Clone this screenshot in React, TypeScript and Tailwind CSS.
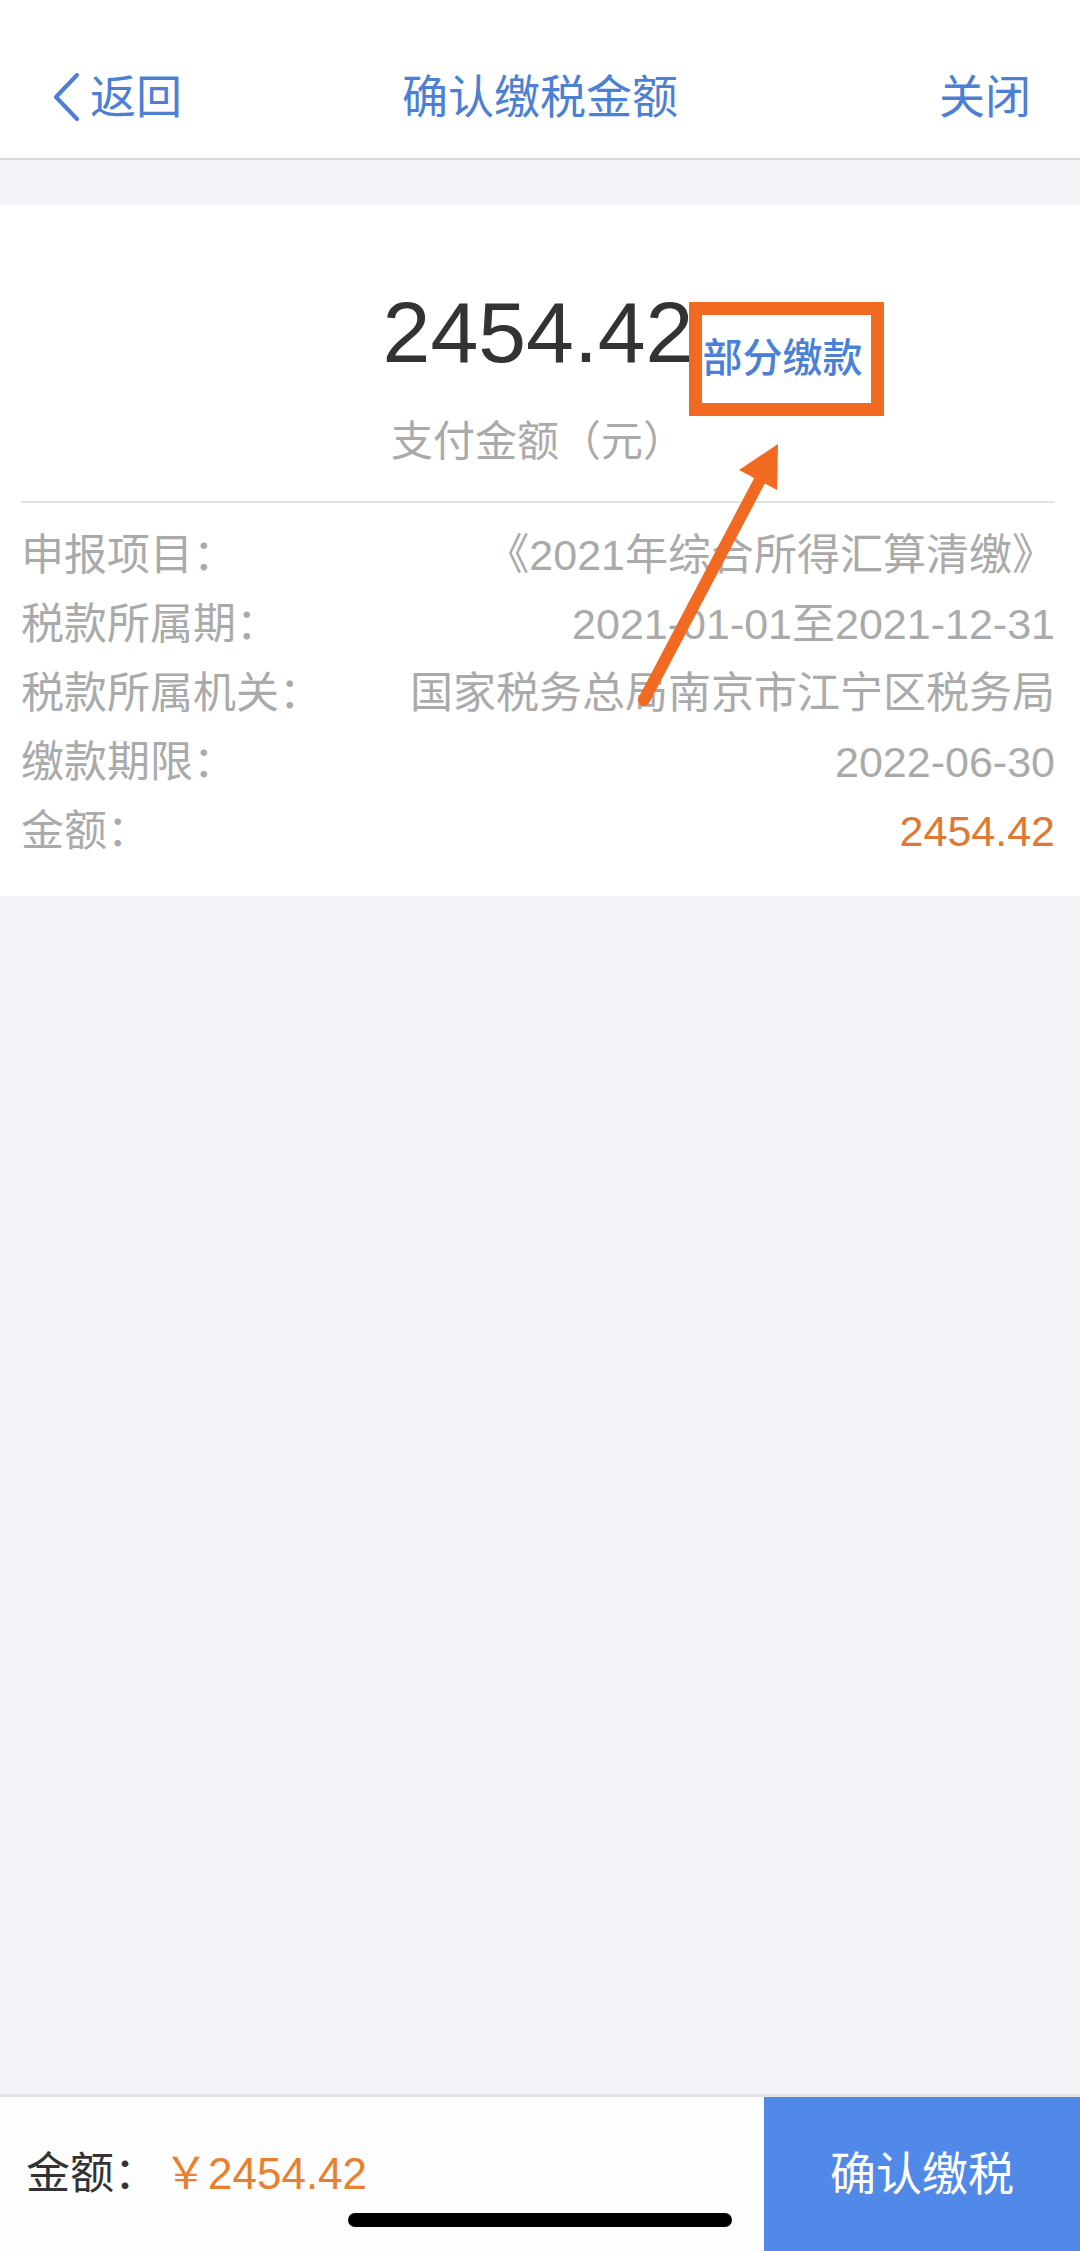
const font = "font-['Liberation_Sans','Noto_Sans_CJK_SC',sans-serif]";

const rows = [
  { label: "申报项目：", value: "《2021年综合所得汇算清缴》" },
  { label: "税款所属期：", value: "2021-01-01至2021-12-31" },
  { label: "税款所属机关：", value: "国家税务总局南京市江宁区税务局" },
  { label: "缴款期限：", value: "2022-06-30" },
  { label: "金额：", value: "2454.42", highlight: true },
];

function Header() {
  return (
    <header className="relative flex h-[160px] shrink-0 items-center justify-between border-b-2 border-[#d9d9dc] bg-white pl-[52px] pr-[49px] pt-[36px] text-[46px] text-[#4d7fd4]">
      <button type="button" className="flex items-center gap-[10px]">
        <svg width="28" height="48" viewBox="0 0 28 48" fill="none">
          <path d="M25 2 L4 24 L25 46" stroke="currentColor" strokeWidth="4" strokeLinecap="round" strokeLinejoin="round" />
        </svg>
        <span>返回</span>
      </button>
      <h1 className="pointer-events-none absolute inset-x-0 bottom-0 top-[36px] flex items-center justify-center text-[46px] font-normal">
        确认缴税金额
      </h1>
      <button type="button">关闭</button>
    </header>
  );
}

function Arrow() {
  return (
    <svg className="pointer-events-none absolute left-0 top-0" width="1080" height="900" viewBox="0 0 1080 900">
      <line x1="644" y1="700" x2="762" y2="476" stroke="#f26a22" strokeWidth="12" strokeLinecap="round" />
      <polygon points="778,444 739,470 777,490" fill="#f26a22" />
    </svg>
  );
}

export default function App() {
  return (
    <div className={`${font} relative flex h-[2251px] w-[1080px] flex-col overflow-hidden bg-[#f3f4f8]`}>
      <Header />

      <section className="mt-[45px] bg-white pb-[30px] pl-[21px] pr-[25px]">
        <div className="flex justify-center pt-[83px]">
          <div className="relative">
            <span className="block text-[86px] leading-[88px] text-[#333333]">2454.42</span>
            <div className="absolute bottom-[-40px] left-full -ml-[4px] h-[114px] w-[195px] border-[13px] border-[#f26a22]">
              <span className="absolute left-0 top-[23px] whitespace-nowrap text-[40px] font-medium leading-[40px] text-[#4a80d8]">部分缴款</span>
            </div>
          </div>
        </div>
        <p className="mt-[38px] text-center text-[42px] leading-[56px] text-[#aaaaaa]">支付金额（元）</p>
        <div className="mt-[31px] border-t-2 border-[#e3e3e3] pt-[18px]">
          {rows.map((row) => (
            <div key={row.label} className="flex h-[69px] items-center justify-between text-[43px]">
              <span className="text-[#aaaaaa]">{row.label}</span>
              <span className={row.highlight ? "text-[#e07834]" : "text-[#aaaaaa]"}>{row.value}</span>
            </div>
          ))}
        </div>
      </section>

      <div className="flex-1" />

      <footer className="relative flex h-[157px] shrink-0 border-t-[3px] border-[#e3e4e8] bg-[#fdfdfe]">
        <div className="flex flex-1 items-center pl-[26px] text-[44px]">
          <span className="text-[#333333]">金额：</span>
          <span className="ml-[6px] text-[#e8802f]">￥2454.42</span>
        </div>
        <button type="button" className="flex w-[316px] items-center justify-center bg-[#5189e8] text-[46px] text-white">
          确认缴税
        </button>
        <div className="absolute bottom-[24px] left-[348px] h-[14px] w-[384px] rounded-full bg-black" />
      </footer>

      <Arrow />
    </div>
  );
}
